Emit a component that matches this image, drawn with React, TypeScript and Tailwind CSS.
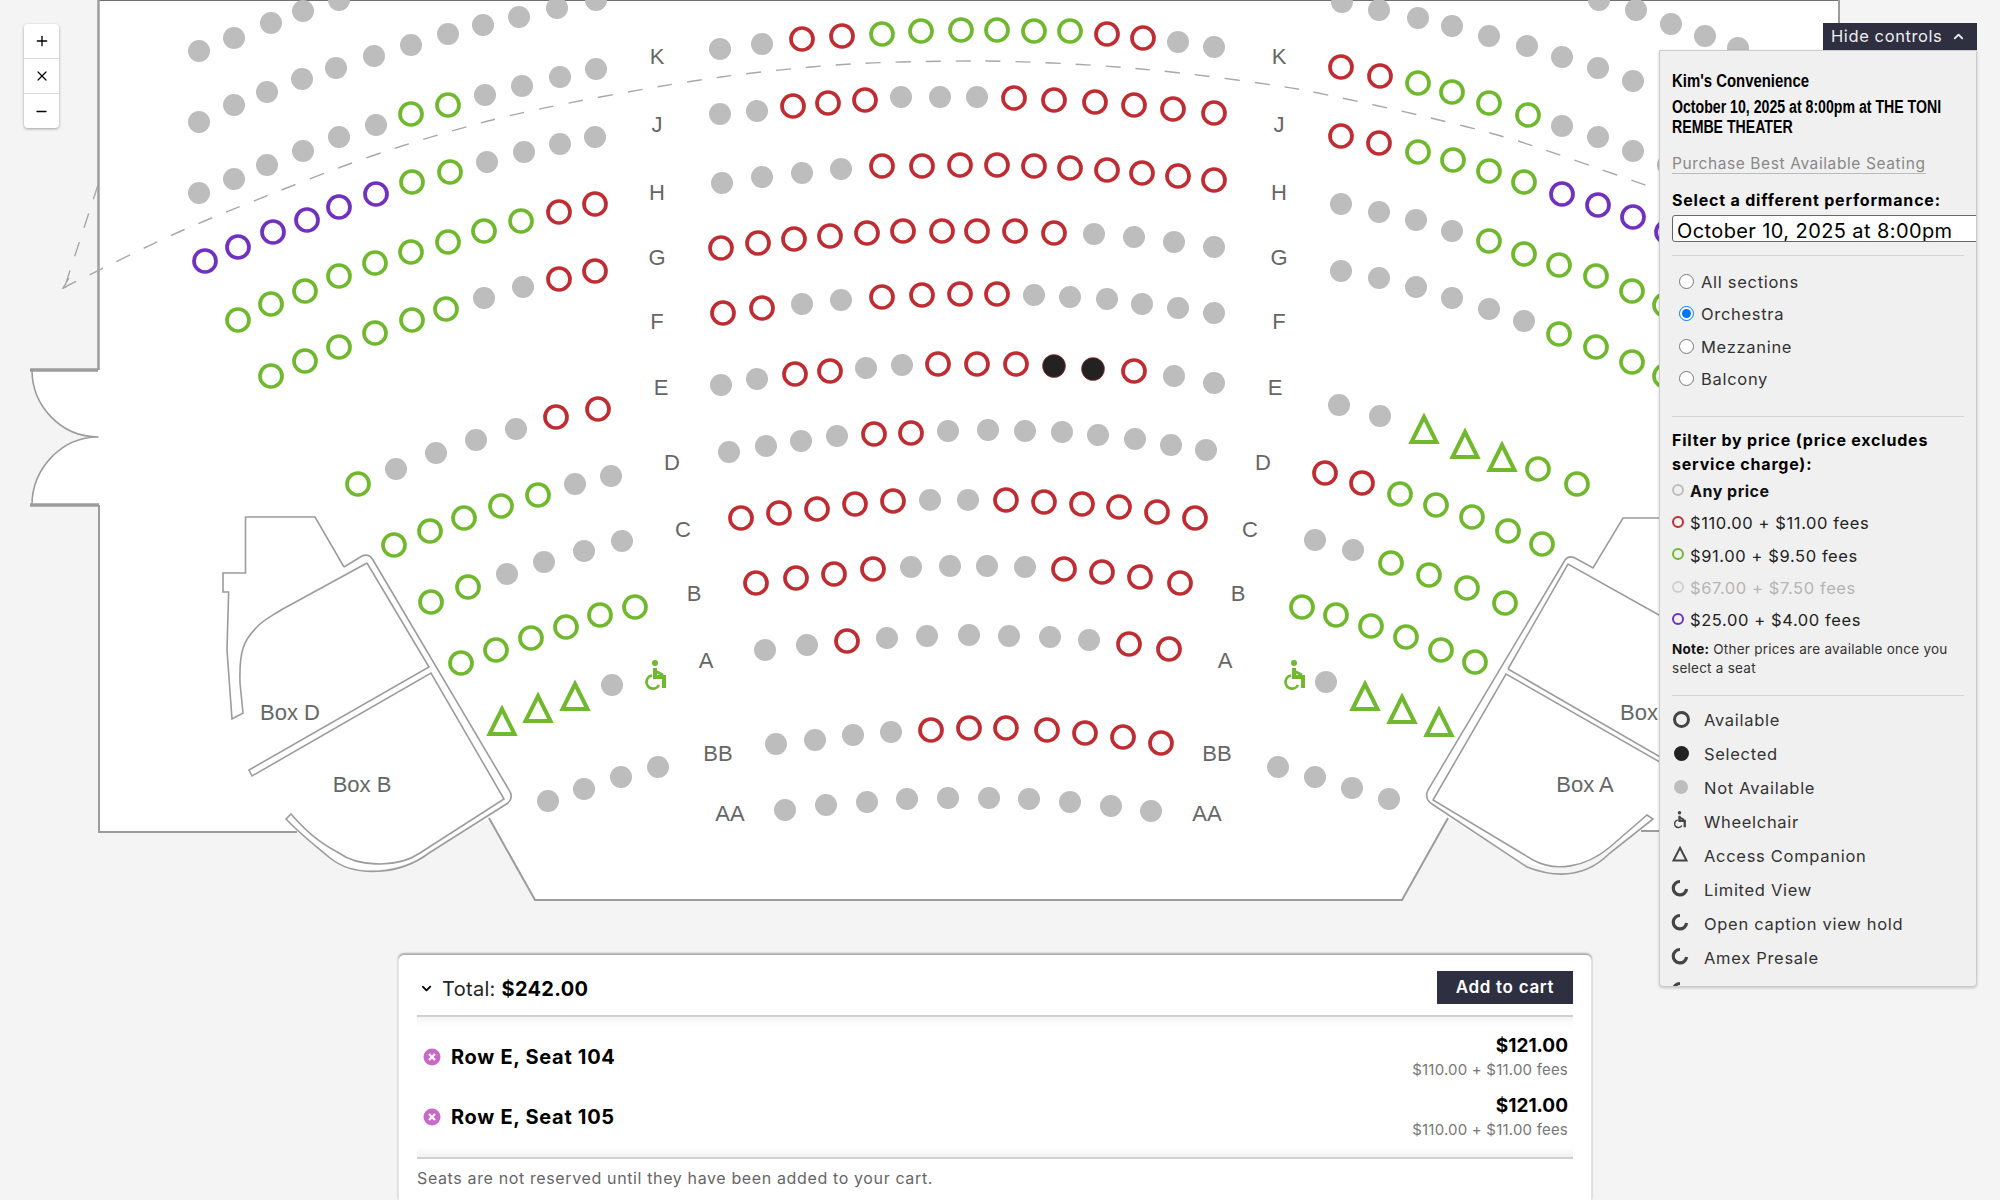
import { ChevronDown, ChevronUp, Minus, Plus, X } from "lucide-react";

// Types
type Kind = "gray" | "red" | "green" | "purple" | "dark";
type SeatRow = { kind: Kind; pts: number[][] };

const seatColors: Record<Kind, string> = {
  gray: "#bdbdbd",
  red: "#bf2d32",
  green: "#70b92e",
  purple: "#7030c0",
  dark: "#222222",
};

// Seat positions, read off the house plan
const seatRows: SeatRow[] = [
  // left block
  { kind: "gray", pts: [[199, 51], [234, 38], [271, 23], [303, 11], [339, 0]] },
  { kind: "gray", pts: [[199, 122], [234, 105], [267, 92], [302, 79], [336, 68], [374, 56], [411, 45], [448, 34], [483, 25], [519, 17], [557, 8], [596, 0]] },
  { kind: "gray", pts: [[199, 193], [234, 179], [267, 165], [303, 151], [339, 137], [376, 125]] },
  { kind: "green", pts: [[411, 114], [448, 105]] },
  { kind: "gray", pts: [[485, 95], [522, 86], [560, 77], [596, 69]] },
  { kind: "purple", pts: [[205, 261], [238, 247], [273, 232], [307, 220], [339, 207], [376, 194]] },
  { kind: "green", pts: [[412, 182], [450, 172]] },
  { kind: "gray", pts: [[487, 162], [524, 152], [560, 144], [595, 137]] },
  { kind: "green", pts: [[238, 320], [271, 304], [305, 291], [339, 276], [375, 263], [411, 252], [448, 242], [484, 231], [521, 221]] },
  { kind: "red", pts: [[559, 212], [595, 204]] },
  { kind: "green", pts: [[271, 376], [305, 361], [339, 347], [375, 333], [412, 320], [446, 309]] },
  { kind: "gray", pts: [[484, 298], [523, 287]] },
  { kind: "red", pts: [[559, 279], [595, 271]] },
  { kind: "green", pts: [[358, 484]] },
  { kind: "gray", pts: [[396, 469], [436, 453], [476, 440], [516, 429]] },
  { kind: "red", pts: [[556, 417], [598, 409]] },
  { kind: "green", pts: [[394, 545], [430, 531], [464, 518], [501, 506], [538, 495]] },
  { kind: "gray", pts: [[575, 484], [611, 476]] },
  { kind: "green", pts: [[431, 602], [468, 587]] },
  { kind: "gray", pts: [[507, 574], [544, 562], [584, 551], [622, 541]] },
  { kind: "green", pts: [[461, 663], [496, 650], [531, 638], [566, 627], [600, 615], [635, 607]] },
  { kind: "gray", pts: [[612, 685]] },
  { kind: "gray", pts: [[548, 801], [584, 789], [621, 777], [658, 767]] },
  // center block
  { kind: "gray", pts: [[720, 49], [762, 44]] },
  { kind: "red", pts: [[802, 39], [842, 36]] },
  { kind: "green", pts: [[882, 34], [921, 31], [961, 30], [997, 30], [1034, 31], [1070, 31]] },
  { kind: "red", pts: [[1107, 34], [1143, 38]] },
  { kind: "gray", pts: [[1178, 42], [1214, 47]] },
  { kind: "gray", pts: [[720, 114], [757, 111]] },
  { kind: "red", pts: [[793, 106], [828, 103], [865, 100]] },
  { kind: "gray", pts: [[901, 97], [940, 97], [977, 97]] },
  { kind: "red", pts: [[1014, 98], [1054, 100], [1095, 102], [1134, 105], [1173, 109], [1214, 113]] },
  { kind: "gray", pts: [[722, 183], [762, 177], [802, 173], [841, 169]] },
  { kind: "red", pts: [[882, 166], [922, 166], [960, 165], [997, 165], [1034, 166], [1070, 168], [1107, 170], [1142, 173], [1178, 176], [1214, 180]] },
  { kind: "red", pts: [[721, 248], [758, 243], [794, 239], [830, 236], [867, 233], [903, 231], [942, 231], [977, 231], [1015, 231], [1054, 233]] },
  { kind: "gray", pts: [[1094, 234], [1134, 237], [1174, 242], [1214, 247]] },
  { kind: "red", pts: [[723, 313], [762, 308]] },
  { kind: "gray", pts: [[802, 304], [841, 300]] },
  { kind: "red", pts: [[882, 297], [922, 295], [960, 294], [997, 294]] },
  { kind: "gray", pts: [[1034, 295], [1070, 297], [1107, 299], [1142, 304], [1178, 308], [1214, 313]] },
  { kind: "gray", pts: [[721, 385], [757, 379]] },
  { kind: "red", pts: [[795, 374], [830, 371]] },
  { kind: "gray", pts: [[866, 368], [902, 365]] },
  { kind: "red", pts: [[938, 364], [977, 364], [1016, 364]] },
  { kind: "dark", pts: [[1054, 366], [1093, 369]] },
  { kind: "red", pts: [[1134, 371]] },
  { kind: "gray", pts: [[1174, 376], [1214, 383]] },
  { kind: "gray", pts: [[729, 452], [766, 446], [801, 441], [837, 436]] },
  { kind: "red", pts: [[874, 434], [911, 433]] },
  { kind: "gray", pts: [[948, 431], [988, 430], [1025, 431], [1062, 432], [1098, 435], [1135, 439], [1171, 445], [1206, 450]] },
  { kind: "red", pts: [[741, 518], [779, 513], [817, 509], [855, 504], [893, 501]] },
  { kind: "gray", pts: [[930, 500], [968, 500]] },
  { kind: "red", pts: [[1006, 500], [1044, 502], [1082, 504], [1119, 507], [1157, 512], [1195, 518]] },
  { kind: "red", pts: [[756, 583], [796, 578], [834, 574], [873, 569]] },
  { kind: "gray", pts: [[911, 567], [950, 566], [987, 566], [1025, 567]] },
  { kind: "red", pts: [[1064, 569], [1102, 572], [1140, 577], [1180, 583]] },
  { kind: "gray", pts: [[765, 650], [807, 645]] },
  { kind: "red", pts: [[847, 641]] },
  { kind: "gray", pts: [[887, 638], [927, 636], [969, 635], [1009, 636], [1050, 637], [1089, 640]] },
  { kind: "red", pts: [[1129, 644], [1169, 649]] },
  { kind: "gray", pts: [[776, 744], [815, 740], [853, 735], [891, 732]] },
  { kind: "red", pts: [[931, 730], [969, 728], [1006, 728], [1047, 730], [1085, 733], [1123, 737], [1161, 743]] },
  { kind: "gray", pts: [[785, 810], [826, 805], [867, 802], [907, 799], [948, 798], [989, 798], [1029, 799], [1070, 802], [1111, 806], [1151, 811]] },
  // right block
  { kind: "gray", pts: [[1342, 2], [1379, 10], [1418, 18], [1452, 26], [1489, 36], [1527, 46], [1562, 57], [1598, 68], [1633, 81]] },
  { kind: "gray", pts: [[1599, 0], [1636, 10], [1671, 24], [1705, 36], [1738, 48]] },
  { kind: "red", pts: [[1341, 67], [1380, 76]] },
  { kind: "green", pts: [[1418, 83], [1452, 92], [1489, 103], [1528, 115]] },
  { kind: "gray", pts: [[1562, 126], [1598, 137], [1633, 151], [1668, 165]] },
  { kind: "red", pts: [[1341, 136], [1379, 143]] },
  { kind: "green", pts: [[1418, 152], [1453, 160], [1489, 171], [1524, 182]] },
  { kind: "purple", pts: [[1562, 194], [1598, 205], [1633, 217], [1667, 232]] },
  { kind: "gray", pts: [[1341, 204], [1379, 212], [1416, 220], [1452, 231]] },
  { kind: "green", pts: [[1489, 241], [1524, 254], [1559, 265], [1596, 276], [1632, 291], [1665, 305]] },
  { kind: "gray", pts: [[1341, 271], [1379, 278], [1416, 287], [1452, 298], [1489, 309], [1524, 321]] },
  { kind: "green", pts: [[1559, 334], [1596, 347], [1632, 362], [1665, 376]] },
  { kind: "gray", pts: [[1339, 405], [1380, 416]] },
  { kind: "green", pts: [[1538, 469], [1577, 484]] },
  { kind: "red", pts: [[1325, 473], [1362, 483]] },
  { kind: "green", pts: [[1400, 494], [1436, 505], [1472, 517], [1508, 531], [1542, 544]] },
  { kind: "gray", pts: [[1315, 540], [1353, 550]] },
  { kind: "green", pts: [[1391, 563], [1429, 575], [1467, 588], [1505, 603]] },
  { kind: "green", pts: [[1302, 607], [1336, 615], [1371, 626], [1406, 637], [1441, 650], [1475, 662]] },
  { kind: "gray", pts: [[1326, 682]] },
  { kind: "gray", pts: [[1278, 767], [1315, 777], [1352, 788], [1389, 799]] },
];

const companions = [[502, 722], [538, 709], [575, 697], [1424, 430], [1465, 445], [1502, 458], [1365, 697], [1402, 710], [1439, 723]];

const rowLabels = [
  { t: "K", l: 657, r: 1279, y: 56 },
  { t: "J", l: 657, r: 1279, y: 124 },
  { t: "H", l: 657, r: 1279, y: 192 },
  { t: "G", l: 657, r: 1279, y: 257 },
  { t: "F", l: 657, r: 1279, y: 321 },
  { t: "E", l: 661, r: 1275, y: 387 },
  { t: "D", l: 672, r: 1263, y: 462 },
  { t: "C", l: 683, r: 1250, y: 529 },
  { t: "B", l: 694, r: 1238, y: 593 },
  { t: "A", l: 706, r: 1225, y: 660 },
  { t: "BB", l: 718, r: 1217, y: 753 },
  { t: "AA", l: 730, r: 1207, y: 813 },
];

const dashPts = [[63, 288], [97, 271], [177, 232], [261, 198], [358, 160], [446, 132], [530, 110], [676, 83], [766, 71], [856, 63], [946, 61], [1007, 61], [1097, 65], [1185, 73], [1289, 87], [1333, 96], [1420, 115], [1507, 137], [1563, 156], [1662, 191]];

const smooth = (pts: number[][]) => {
  let d = `M${pts[0][0]} ${pts[0][1]}`;
  for (let i = 1; i < pts.length - 1; i++) {
    const mx = (pts[i][0] + pts[i + 1][0]) / 2;
    const my = (pts[i][1] + pts[i + 1][1]) / 2;
    d += ` Q${pts[i][0]} ${pts[i][1]} ${mx} ${my}`;
  }
  const last = pts[pts.length - 1];
  return `${d} L${last[0]} ${last[1]}`;
};

// Icons
const WheelchairShape = ({ color }: { color: string }) => (
  <g fill="none" stroke={color}>
    <circle cx="11" cy="3" r="3" fill={color} stroke="none" />
    <path d="M11 8V17H20V28" strokeWidth="4" />
    <path d="M11 11L19 15" strokeWidth="3" />
    <path d="M8 15.5A6.6 6.6 0 1 0 15 25" strokeWidth="2.6" />
  </g>
);

const Triangle = ({ x, y }: { x: number; y: number }) => (
  <polygon
    points={`${x},${y - 13} ${x + 12.5},${y + 12} ${x - 12.5},${y + 12}`}
    fill="none"
    stroke={seatColors.green}
    strokeWidth="4"
  />
);

// House plan
const SeatMap = () => (
  <svg width="2000" height="950" viewBox="0 0 2000 950" className="block font-['Liberation_Sans',sans-serif]">
    {/* Floor */}
    <path
      d="M98.5 0V370H32C32 405 60 437 98.5 437C60 437 32 470 32 505H99V832H297L339 863C355 873 400 873 429 853L489 818L535 900H1402L1448 818L1507 853C1535 873 1580 873 1610 847L1641 831H1839V0Z"
      fill="#fff"
    />
    {/* Walls */}
    <g fill="none" stroke="#9c9c9c" strokeWidth="1.6">
      <path d="M98.5 0H1839" stroke="#707070" strokeWidth="2" />
      <path d="M98.5 0V370" strokeWidth="2.5" />
      <path d="M30 370H98" strokeWidth="3.5" />
      <path d="M32 370C32 405 60 437 98.5 437C60 437 32 470 32 505" />
      <path d="M30 505H99" strokeWidth="3.5" />
      <path d="M99 505V832H297" strokeWidth="2" />
      <path d="M1839 0V50" strokeWidth="2" />
      <path d="M489 818L535 900H1402L1448 818" strokeWidth="2" />
      <path d="M1641 831H1700" strokeWidth="2" />
      {/* Box D and B */}
      <path d="M344 567L315 517H245.5V573H223V592H228.6L227 650L232 719L243 713L240 683C239 650 244 640 257 627C263 620 272 616 281 610L367 563" />
      <path d="M344 567L362 556Q369 553 373 560L509 790Q514 797 508 803L429 853C400 875 355 878 330 858C312 843 298 832 286 819L291 814C305 830 318 842 339 853C355 865 395 870 420 853L504 799L431 673L252 776L249 770L429 667L367 563" />
      {/* Box A and C */}
      <path d="M1700 518H1623L1593 568L1575 558Q1569 555 1565 560L1428 790Q1424 799 1432 804L1527 867C1555 878 1585 878 1610 853L1653 819L1647 815L1610 847C1585 868 1555 872 1533 860L1433 800L1506 674L1700 785M1508 669L1700 780M1508 669L1568 564L1700 638" />
    </g>
    {/* Sight line */}
    <path d={smooth(dashPts)} fill="none" stroke="#a8a8a8" strokeWidth="1.4" strokeDasharray="15 15" />
    <path d="M98 185L65 286M69 278L63 288L72 285" fill="none" stroke="#a8a8a8" strokeWidth="1.4" strokeDasharray="15 15" />
    {/* Seats */}
    {seatRows.map((row, i) =>
      row.pts.map(([x, y]) => (
        <circle
          key={`${i}-${x}-${y}`}
          cx={x}
          cy={y}
          r={row.kind === "dark" ? 11.5 : 11}
          fill={row.kind === "gray" || row.kind === "dark" ? seatColors[row.kind] : "#fff"}
          stroke={row.kind === "gray" ? "none" : row.kind === "dark" ? seatColors.red : seatColors[row.kind]}
          strokeWidth={row.kind === "dark" ? 0.6 : 3.7}
        />
      )),
    )}
    {companions.map(([x, y]) => (
      <Triangle key={`${x}-${y}`} x={x} y={y} />
    ))}
    <g transform="translate(644 660)">
      <WheelchairShape color={seatColors.green} />
    </g>
    <g transform="translate(1283 660)">
      <WheelchairShape color={seatColors.green} />
    </g>
    {/* Labels */}
    <g fontSize="22" fill="#666" textAnchor="middle" dominantBaseline="central">
      {rowLabels.map((row) => (
        <g key={row.t}>
          <text x={row.l} y={row.y}>{row.t}</text>
          <text x={row.r} y={row.y}>{row.t}</text>
        </g>
      ))}
      <text x="290" y="712">Box D</text>
      <text x="362" y="784">Box B</text>
      <text x="1585" y="784">Box A</text>
      <text x="1650" y="712">Box C</text>
    </g>
  </svg>
);

const ZoomControls = () => (
  <div className="absolute left-6 top-6 flex w-[35px] flex-col rounded-sm bg-white text-black shadow-[0_1px_3px_rgba(0,0,0,0.35)]">
    <button className="flex h-[35px] items-center justify-center border-b border-[#ddd]">
      <Plus size={16} strokeWidth={2} />
    </button>
    <button className="flex h-[35px] items-center justify-center border-b border-[#ddd]">
      <X size={16} strokeWidth={1.8} />
    </button>
    <button className="flex h-[34px] items-center justify-center">
      <Minus size={15} strokeWidth={2.4} />
    </button>
  </div>
);

const sections = ["All sections", "Orchestra", "Mezzanine", "Balcony"];

const prices = [
  { label: "$110.00 + $11.00 fees", ring: "border-[#bf2d32]", text: "text-[#222]" },
  { label: "$91.00 + $9.50 fees", ring: "border-[#70b92e]", text: "text-[#222]" },
  { label: "$67.00 + $7.50 fees", ring: "border-[#d0d0d0]", text: "text-[#b5b5b5]" },
  { label: "$25.00 + $4.00 fees", ring: "border-[#7030c0]", text: "text-[#222]" },
];

const LimitedIcon = () => (
  <svg width="18" height="18" viewBox="0 0 18 18" className="-ml-[1px] -mt-[6px]">
    <path d="M9 2.5A6.7 6.7 0 1 0 15.6 10" fill="none" stroke="#444" strokeWidth="3.2" />
  </svg>
);

const legend = [
  {
    label: "Available",
    icon: <span className="-mt-[3px] ml-[1px] h-[17px] w-[17px] rounded-full border-[3.5px] border-[#444]" />,
  },
  { label: "Selected", icon: <span className="-mt-[3px] ml-[2px] h-[15px] w-[15px] rounded-full bg-[#222]" /> },
  { label: "Not Available", icon: <span className="-mt-[3px] ml-[2px] h-[14px] w-[14px] rounded-full bg-[#bdbdbd]" /> },
  {
    label: "Wheelchair",
    icon: (
      <svg width="13" height="18" viewBox="0 0 22 31" className="ml-[1px] -mt-[5px]">
        <WheelchairShape color="#444" />
      </svg>
    ),
  },
  {
    label: "Access Companion",
    icon: (
      <svg width="16" height="16" viewBox="0 0 16 16" className="-mt-[5px]">
        <polygon points="8,1.8 14.5,14.5 1.5,14.5" fill="none" stroke="#444" strokeWidth="2" />
      </svg>
    ),
  },
  { label: "Limited View", icon: <LimitedIcon /> },
  { label: "Open caption view hold", icon: <LimitedIcon /> },
  { label: "Amex Presale", icon: <LimitedIcon /> },
  { label: "", icon: <LimitedIcon /> },
];

const ControlsPanel = () => (
  <div className="absolute left-[1659px] top-[23px] w-[318px] font-['Inter',sans-serif]">
    <div className="ml-auto flex h-[27px] w-[154px] items-center gap-[9px] bg-[#2f2f42] pl-2 text-[16.5px] tracking-[0.6px] text-[#eee]">
      Hide controls
      <ChevronUp size={15} strokeWidth={3} />
    </div>
    <div className="h-[937px] overflow-hidden rounded-b-sm border border-[#ccc] bg-[#f0f0f0] px-3 pt-[18px] shadow-[0_1px_3px_rgba(0,0,0,0.2)]">
      {/* Show info */}
      <div className="w-[127%] origin-left scale-x-[0.785] font-['Liberation_Sans',sans-serif] font-bold text-black">
        <h2 className="text-[19px] leading-6">Kim's Convenience</h2>
        <p className="mt-1 w-[390px] text-[18px] leading-5">October 10, 2025 at 8:00pm at THE TONI REMBE THEATER</p>
      </div>
      <div className="mt-[17px] h-5 text-[15.5px] leading-5 tracking-[0.6px] text-[#888]">
        <a className="border-b border-[#bbb]">Purchase Best Available Seating</a>
      </div>
      <h3 className="mt-4 text-[16px] font-bold leading-5 tracking-[0.8px] text-black">Select a different performance:</h3>
      <select className="mt-[5px] h-[27px] w-[330px] appearance-none rounded-[3px] border border-[#666] bg-white px-1 text-[20px] tracking-[0.4px] text-black">
        <option>October 10, 2025 at 8:00pm</option>
      </select>
      <div className="mt-[11px] h-px bg-[#d4d4d4]" />
      {/* Sections */}
      <div className="mt-[10px] flex flex-col">
        {sections.map((name) => (
          <label key={name} className="flex h-[32.5px] items-center gap-[7px] pl-[7px] text-[16.5px] tracking-[0.7px] text-[#333]">
            <input type="radio" name="section" defaultChecked={name === "Orchestra"} className="-mt-[2px] h-[15px] w-[15px]" />
            {name}
          </label>
        ))}
      </div>
      <div className="mt-5 h-px bg-[#d4d4d4]" />
      {/* Price filter */}
      <h3 className="mt-[11px] text-[16px] font-bold leading-6 tracking-[0.8px] text-black">Filter by price (price excludes service charge):</h3>
      <div className="-mt-[1px] flex flex-col">
        <div className="flex h-[32.4px] items-center gap-[6px] text-[16px] font-bold tracking-[0.5px] text-[#111]">
          <span className="-mt-[3px] h-3 w-3 rounded-full border-[2.5px] border-[#bdbdbd]" />
          Any price
        </div>
        {prices.map((price) => (
          <div key={price.label} className={`flex h-[32.4px] items-center gap-[6px] text-[16.5px] tracking-[0.6px] ${price.text}`}>
            <span className={`-mt-[3px] h-3 w-3 rounded-full border-[2.5px] ${price.ring}`} />
            {price.label}
          </div>
        ))}
      </div>
      <p className="mt-[3px] text-[13.5px] leading-[19.3px] tracking-[0.25px] text-[#333]">
        <b className="text-[#111]">Note:</b> Other prices are available once you select a seat
      </p>
      <div className="mt-[16px] h-px bg-[#d4d4d4]" />
      {/* Legend */}
      <div className="mt-2 flex flex-col">
        {legend.map((item, i) => (
          <div key={i} className="flex h-[34px] items-center text-[16.5px] tracking-[0.7px] text-[#333]">
            <span className="flex w-[32px] shrink-0 items-center">{item.icon}</span>
            {item.label}
          </div>
        ))}
      </div>
    </div>
  </div>
);

const RemoveIcon = () => (
  <svg width="18" height="18" viewBox="0 0 17 17">
    <circle cx="8.5" cy="8.5" r="8" fill="#c868c8" />
    <path d="M5.7 5.7L11.3 11.3M11.3 5.7L5.7 11.3" stroke="#fff" strokeWidth="2.2" />
  </svg>
);

const cartSeats = ["Row E, Seat 104", "Row E, Seat 105"];

const Cart = () => (
  <div className="ml-[398px] mt-[5px] h-[245px] w-[1194px] rounded-t-md border-x border-[#e4e4e4] bg-white px-[18px] font-['Inter',sans-serif] shadow-[0_-1.5px_2px_rgba(0,0,0,0.3)]">
    <div className="flex h-[62px] items-start justify-between border-b-2 border-[#d0d0d0] pt-4">
      <div className="mt-[1px] flex h-[33px] items-center gap-2 text-[20px] tracking-[0.3px] text-[#222]">
        <ChevronDown size={15} strokeWidth={3} className="ml-[2px] text-black" />
        <span>
          Total: <b className="text-black">$242.00</b>
        </span>
      </div>
      <button className="h-[33px] w-[136px] bg-[#2f2f42] text-[17px] font-semibold tracking-[0.7px] text-white">Add to cart</button>
    </div>
    <div className="bg-[linear-gradient(#f4f4f4,#fff_10px,#fff_calc(100%-10px),#f2f2f2)] py-[10px]">
      {cartSeats.map((seat) => (
        <div key={seat} className="flex h-[60px] items-center justify-between pl-[6px] pr-[5px]">
          <div className="flex items-center gap-[10px] text-[20px] font-bold tracking-[0.7px] text-black">
            <RemoveIcon />
            {seat}
          </div>
          <div className="mt-[2px] text-right">
            <div className="text-[19px] font-bold leading-6 text-black">$121.00</div>
            <div className="text-[15px] leading-6 tracking-[0.2px] text-[#777]">$110.00 + $11.00 fees</div>
          </div>
        </div>
      ))}
    </div>
    <p className="border-t-2 border-[#d0d0d0] pt-[9px] text-[16px] leading-5 tracking-[0.63px] text-[#666]">
      Seats are not reserved until they have been added to your cart.
    </p>
  </div>
);

const App = () => {
  return (
    <div className="relative h-[1200px] w-[2000px] overflow-hidden bg-[#f4f4f4]">
      <SeatMap />
      <ZoomControls />
      <ControlsPanel />
      <Cart />
    </div>
  );
};

export default App;
